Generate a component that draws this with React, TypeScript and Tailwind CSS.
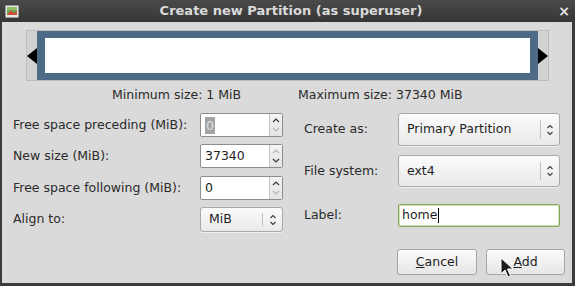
import React from "react";

const font = { fontFamily: '"DejaVu Sans", "Liberation Sans", sans-serif' };

function UpDown({ up, down }: { up: boolean; down: boolean }) {
  return (
    <div className="flex flex-col items-center justify-center w-[13px] h-full border-l border-[#c4c4c4] bg-gradient-to-b from-[#f4f4f4] to-[#e4e4e4]">
      <svg width="8" height="20" viewBox="0 0 8 20">
        <path d="M1 7 L4 4 L7 7" fill="none" stroke={up ? "#3a3a3a" : "#b4b4b4"} strokeWidth="1.2" />
        <path d="M1 13 L4 16 L7 13" fill="none" stroke={down ? "#3a3a3a" : "#b4b4b4"} strokeWidth="1.2" />
      </svg>
    </div>
  );
}

function Spin({ value, up, down, selected }: { value: string; up: boolean; down: boolean; selected?: boolean }) {
  return (
    <div className="flex w-[83px] h-[24px] border border-[#8e8e8e] rounded-[2px] bg-white overflow-hidden">
      <div className="flex-1 flex items-center pl-[4px] text-[12.5px] text-[#1e1e1e]">
        {selected ? (
          <span className="bg-[#a3a3a3] text-[#e0e0e0] px-[1px] leading-[17px]">{value}</span>
        ) : (
          <span>{value}</span>
        )}
      </div>
      <UpDown up={up} down={down} />
    </div>
  );
}

function ComboArrows() {
  return (
    <svg width="8" height="14" viewBox="0 0 8 14">
      <path d="M1.5 5 L4 2.5 L6.5 5" fill="none" stroke="#3a3a3a" strokeWidth="1.1" />
      <path d="M1.5 9 L4 11.5 L6.5 9" fill="none" stroke="#3a3a3a" strokeWidth="1.1" />
    </svg>
  );
}

function Combo({ value, w, h, sepRight }: { value: string; w: string; h: string; sepRight: string }) {
  return (
    <div className={`flex items-center ${w} ${h} border border-[#a9a9a9] rounded-[3px] bg-gradient-to-b from-[#fbfbfb] to-[#e9e9e9] shadow-[0_1px_0_rgba(255,255,255,0.6)]`}>
      <div className="flex-1 pl-[8px] text-[12.5px] text-[#1e1e1e]">{value}</div>
      <div className="w-px h-[60%] bg-[#c0c0c0]" />
      <div className={`${sepRight} flex items-center justify-center`}>
        <ComboArrows />
      </div>
    </div>
  );
}

function TitleIcon() {
  return (
    <svg width="14" height="13" viewBox="0 0 14 13">
      <rect x="0.5" y="0.5" width="13" height="12" rx="1" fill="#e8e8e8" stroke="#9a9a9a" />
      <rect x="2" y="2" width="10" height="8" fill="#6aa84f" />
      <path d="M2 10 L6 5 L9 8 L12 6 L12 10 Z" fill="#cc4b3b" />
      <rect x="2" y="2" width="10" height="3" fill="#8fc06a" />
    </svg>
  );
}

function Cursor() {
  return (
    <svg width="14" height="22" viewBox="0 0 14 22" className="absolute left-[500px] top-[257px]">
      <path d="M1 1 L1 17 L5 13 L8 20 L10.5 19 L7.5 12 L13 12 Z" fill="#1a1a1a" stroke="#ffffff" strokeWidth="1" strokeLinejoin="round" />
    </svg>
  );
}

export default function App() {
  return (
    <div className="relative w-[575px] h-[286px] bg-[#3b3b3b] flex flex-col overflow-hidden" style={font}>
      {/* Title bar */}
      <div className="h-[22px] flex items-center bg-gradient-to-b from-[#4a4a4a] to-[#363636] pl-[5px] pr-[4px]">
        <TitleIcon />
        <div className="flex-1 text-center text-[13px] font-bold text-[#dadada] pl-[6px]">
          Create new Partition (as superuser)
        </div>
        <div className="w-[14px] text-[#e0e0e0] text-[14px] font-bold leading-none text-center">×</div>
      </div>

      {/* Body */}
      <div className="flex-1 flex pl-[2px] pr-[3px] pb-[3px]">
        <div className="flex-1 bg-[#dadada] flex flex-col text-[12.5px] text-[#2a2a2a]">
          {/* Partition graphic */}
          <div className="mt-[8px] ml-[24px] w-[523px] h-[51px] flex border border-[#bcbcbc] bg-[#d2d2d2]">
            <div className="w-[10px] flex items-center justify-start">
              <svg width="10" height="18" viewBox="0 0 10 18">
                <path d="M0 9 L10 1 L10 17 Z" fill="#000" />
              </svg>
            </div>
            <div className="flex-1 bg-[#4d6a87] p-[7px] pl-[8px] pr-[8px]">
              <div className="w-full h-full bg-white" />
            </div>
            <div className="w-[10px] flex items-center justify-end">
              <svg width="10" height="18" viewBox="0 0 10 18">
                <path d="M10 9 L0 1 L0 17 Z" fill="#000" />
              </svg>
            </div>
          </div>

          {/* Min / Max */}
          <div className="flex h-[16px] mt-[5px]">
            <div className="ml-[110px] w-[186px]">Minimum size: 1 MiB</div>
            <div>Maximum size: 37340 MiB</div>
          </div>

          {/* Form */}
          <div className="flex mt-[11px]">
            <div className="ml-[11px] flex flex-col">
              <div className="flex items-center h-[24px]">
                <div className="w-[187px]">Free space preceding (MiB):</div>
                <Spin value="0" up={true} down={false} selected />
              </div>
              <div className="flex items-center h-[24px] mt-[7px]">
                <div className="w-[187px]">New size (MiB):</div>
                <Spin value="37340" up={false} down={true} />
              </div>
              <div className="flex items-center h-[24px] mt-[8px]">
                <div className="w-[187px]">Free space following (MiB):</div>
                <Spin value="0" up={true} down={false} />
              </div>
              <div className="flex items-center h-[25px] mt-[7px]">
                <div className="w-[187px]">Align to:</div>
                <Combo value="MiB" w="w-[83px]" h="h-[25px]" sepRight="w-[19px]" />
              </div>
            </div>

            <div className="ml-[21px] flex flex-col">
              <div className="flex items-center h-[33px]">
                <div className="w-[94px]">Create as:</div>
                <Combo value="Primary Partition" w="w-[162px]" h="h-[33px]" sepRight="w-[18px]" />
              </div>
              <div className="flex items-center h-[32px] mt-[9px]">
                <div className="w-[94px]">File system:</div>
                <Combo value="ext4" w="w-[162px]" h="h-[32px]" sepRight="w-[18px]" />
              </div>
              <div className="flex items-center h-[23px] mt-[17px]">
                <div className="w-[94px]">Label:</div>
                <div className="w-[162px] h-[23px] border border-[#86a95c] rounded-[2px] bg-white flex items-center pl-[3px] text-[#1e1e1e] shadow-[inset_0_0_0_1px_#cfe0b8]">
                  <span>home</span>
                  <span className="w-px h-[15px] bg-black ml-[1px]" />
                </div>
              </div>
            </div>
          </div>

          {/* Buttons */}
          <div className="flex mt-[17px] ml-[395px]">
            <div className="w-[80px] h-[26px] border border-[#a4a4a4] rounded-[3px] bg-gradient-to-b from-[#fbfbfb] to-[#e6e6e6] flex items-center justify-center text-[#1e1e1e]">
              <span><span className="underline">C</span>ancel</span>
            </div>
            <div className="w-[79px] h-[26px] ml-[9px] border border-[#a4a4a4] rounded-[3px] bg-gradient-to-b from-[#fbfbfb] to-[#e6e6e6] flex items-center justify-center text-[#1e1e1e]">
              <span><span className="underline">A</span>dd</span>
            </div>
          </div>
        </div>
      </div>
      <Cursor />
    </div>
  );
}
